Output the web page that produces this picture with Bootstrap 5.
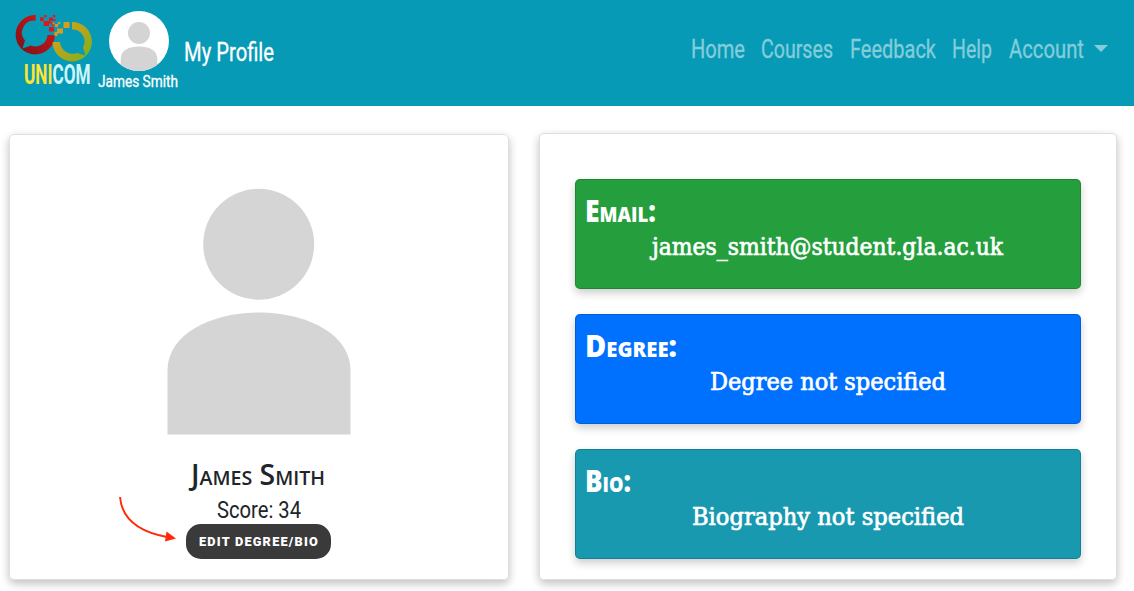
<!DOCTYPE html>
<html lang="en">
<head>
<meta charset="utf-8">
<meta name="viewport" content="width=device-width, initial-scale=1">
<title>My Profile</title>
<link href="https://cdn.jsdelivr.net/npm/bootstrap@5.3.0/dist/css/bootstrap.min.css" rel="stylesheet">
<style>
body{font-family:Roboto,"Open Sans",sans-serif;color:#212529;overflow:hidden}
.topbar{background:#079ab6;height:106px}
.fit{display:inline-block;white-space:nowrap}
.fit>span{display:inline-block;transform-origin:0 50%}
.brand-logo{width:83px;height:90px;margin-left:10px}
.user{width:80px;margin-left:5px;padding-top:11px;color:#fff;font-size:16px;line-height:20px;-webkit-text-stroke:.3px #fff}
.user svg{display:block;margin:0 0 1px 11px;width:60px;height:60px}
.page-name{font-size:25px;line-height:30px;color:#fff;margin:38px 0 0 6px;-webkit-text-stroke:.3px #fff}
.menu{margin:35px 26px 0 0;gap:16.500px;font-size:25px;line-height:30px}
.menu a{color:#83cddb;text-decoration:none;-webkit-text-stroke:.3px #83cddb}
.caret{border:7px solid transparent;border-top-color:#83cddb;border-bottom:0;margin:10px 0 0 -6px}
.panels{padding:27px 17px 0 9px;gap:30px;height:485px}
.panel{border:1px solid #dfdfdf;border-radius:5px;box-shadow:0 4px 8px rgba(0,0,0,.2),0 2px 12px rgba(0,0,0,.06)}
.who{width:500px;height:446px;margin-top:1px;padding-top:39px}
.who>svg.portrait{width:200px;height:270px;margin-bottom:12px}
.caps{font-family:"Open Sans",Lato,sans-serif;font-variant:small-caps;font-size:29px;line-height:36px;margin:0}
.who .caps{font-weight:600;position:relative;left:-1px}
.score{font-size:24.500px;line-height:30px;margin:3px 0 -1px -1px}
.edit{width:145px;height:35px;border-radius:15px;background:#3a3a3a;color:#fff;font-weight:900;font-size:13.6px;line-height:35px;letter-spacing:1.3px;padding:0;border:0;margin-left:-1px}
.pointer{position:absolute;left:105px;top:357px;width:65px;height:55px}
.facts{width:578px;height:447px;padding:45px 35px 0;gap:25px}
.fact{height:110px;border:1px solid rgba(0,0,0,.16);border-radius:5px;color:#fff;padding:13px 10px 0 9px;box-shadow:0 4px 8px rgba(0,0,0,.2)}
.fact .caps{font-weight:800;font-size:30px}
.value{font-family:"DejaVu Serif",serif;font-size:24px;line-height:36px;text-align:center;-webkit-text-stroke:.7px #fff}
.g{background:#259f3d}.b{background:#0070ff}.t{background:#1899b0}
</style>
<script src="https://cdn.jsdelivr.net/npm/bootstrap@5.3.0/dist/js/bootstrap.bundle.min.js"></script>
</head>
<body>
<nav class="topbar d-flex align-items-start">
  <svg class="brand-logo" viewBox="10 0 83 90">
    <defs>
      <linearGradient id="red" x1="0" y1="1" x2="1" y2="0"><stop offset="0" stop-color="#741318"/><stop offset=".6" stop-color="#b81418"/><stop offset="1" stop-color="#e01818"/></linearGradient>
      <linearGradient id="gold" x1="0" y1="0" x2="1" y2="1"><stop offset="0" stop-color="#dda018"/><stop offset=".5" stop-color="#b5a51c"/><stop offset="1" stop-color="#72b31c"/></linearGradient>
    </defs>
    <path fill="url(#red)" d="M35.7 15A19.7 19.7 0 1 0 55 35H47.500A12 12 0 0 1 31 45.500L22.500 48.500L25 40.500A12 12 0 0 1 35.700 20.700Z"/>
    <path fill="url(#gold)" d="M72 22A19.700 19.700 0 1 1 52.500 42H60A12.500 12.500 0 0 0 77 53L85.500 55.500L83 47.500A12 12 0 0 0 72 29.500Z"/>
    <path fill="#df171b" d="M40 17.300h3.700v3.700H40zM44 15h2.500v2.300H44zM53 15h2.300v2.300H53zM49 17.500h4v3.500h-4zM53.500 19h2v2h-2zM43.700 21h5.300v5h-5.300zM49 21.500h2.500v2H49zM51.500 22.500h3v3h-3zM49 27h5v4.500h-5z"/>
    <path fill="#d99d1c" d="M52.500 22.500h2v2h-2zM58 22h2.300v2.300H58zM55 24h3v3h-3zM63.500 22h6v6h-6zM57 28.500h6v5h-6zM54.500 32h3v4h-3z"/>
    <text transform="translate(24 83.800) scale(.625 1)" font-family="Roboto" font-size="27.500" font-weight="700"><tspan fill="#ffe432">UNI</tspan><tspan fill="#cff5fc">COM</tspan></text>
  </svg>
  <div class="user">
    <svg viewBox="0 0 60 60"><defs><clipPath id="disc"><circle cx="30" cy="30" r="30"/></clipPath></defs><g clip-path="url(#disc)"><path fill="#fff" d="M0 0h60v60H0z"/><circle cx="30" cy="22" r="11" fill="#d4d4d4"/><path fill="#d4d4d4" d="M11.700 60V48C11.700 39 20 35.500 30 35.500S48.300 39 48.300 48V60z"/></g></svg>
    <span class="fit" data-w="80">James Smith</span>
  </div>
  <div class="page-name"><span class="fit" data-w="90">My Profile</span></div>
  <div class="menu d-flex ms-auto">
    <a href="#"><span class="fit" data-w="54">Home</span></a>
    <a href="#"><span class="fit" data-w="72">Courses</span></a>
    <a href="#"><span class="fit" data-w="86">Feedback</span></a>
    <a href="#"><span class="fit" data-w="40">Help</span></a>
    <a href="#"><span class="fit" data-w="75">Account</span></a>
    <i class="caret"></i>
  </div>
</nav>
<main class="panels d-flex align-items-start">
  <section class="panel who position-relative d-flex flex-column align-items-center flex-shrink-0">
    <svg class="portrait" viewBox="159 174 200 270"><circle cx="258.700" cy="244.300" r="55.500" fill="#d5d5d5"/><path fill="#d5d5d5" d="M167.500 434.500V370C168 333 213 312.500 259 312.500S350 333 350.500 370V434.500z"/></svg>
    <h3 class="caps"><span class="fit" data-w="134">James Smith</span></h3>
    <div class="score"><span class="fit" data-w="84">Score: 34</span></div>
    <button class="edit btn"><span class="fit" data-w="120">EDIT DEGREE/BIO</span></button>
    <svg class="pointer" viewBox="115 492 65 55"><path d="M120 497C122 520 140 532 167 537" fill="none" stroke="#ff2a0a" stroke-width="1.900"/><path d="M166.500 531.500L176 538.500L165 541.500Z" fill="#ff2a0a"/></svg>
  </section>
  <section class="panel facts d-flex flex-column flex-shrink-0">
    <div class="fact g"><h4 class="caps"><span class="fit" data-w="71">Email:</span></h4><div class="value"><span class="fit" data-w="351">james_smith@student.gla.ac.uk</span></div></div>
    <div class="fact b"><h4 class="caps"><span class="fit" data-w="92">Degree:</span></h4><div class="value"><span class="fit" data-w="236">Degree not specified</span></div></div>
    <div class="fact t"><h4 class="caps"><span class="fit" data-w="46">Bio:</span></h4><div class="value"><span class="fit" data-w="272">Biography not specified</span></div></div>
  </section>
</main>
<script>
document.querySelectorAll('.fit').forEach(el => {
  const s = document.createElement('span');
  s.textContent = el.textContent;
  el.replaceChildren(s);
  const w = s.getBoundingClientRect().width;
  el.style.width = el.dataset.w + 'px';
  el.style.textAlign = 'left';
  s.style.transform = `scaleX(${el.dataset.w / w})`;
});
</script>
</body>
</html>
